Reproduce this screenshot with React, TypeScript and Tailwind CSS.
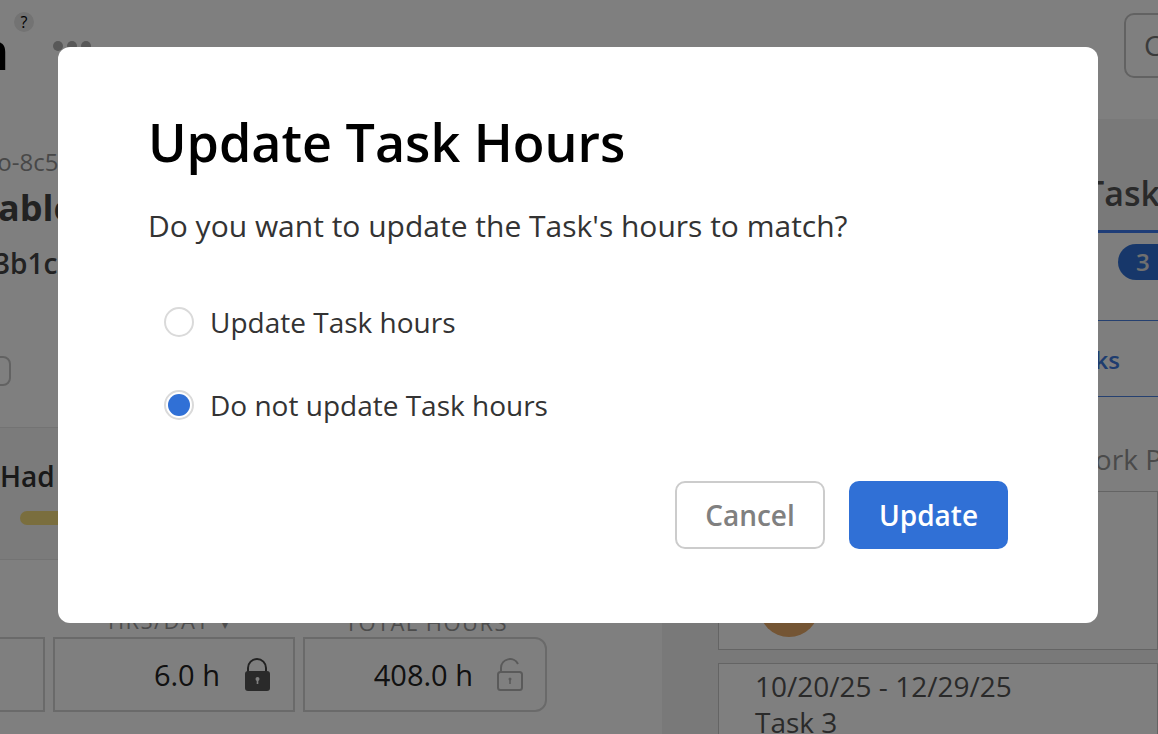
const LockClosed = () => (
    <svg width="30" height="36" viewBox="0 0 30 36" className="shrink-0">
        <path d="M6 16V11a9 9 0 0 1 18 0v5" fill="none" stroke="#444444" strokeWidth="2" />
        <rect x="3" y="14" width="25" height="20" rx="3" fill="#555555" />
        <circle cx="15.5" cy="22" r="2" fill="#ffffff" />
        <rect x="14.7" y="22" width="1.6" height="5" fill="#ffffff" />
    </svg>
);

const LockOpen = () => (
    <svg width="30" height="36" viewBox="0 0 30 36" className="shrink-0">
        <path d="M6 16V11a9 9 0 0 1 17-4" fill="none" stroke="#b4b4b4" strokeWidth="2" />
        <rect x="3" y="15" width="24" height="18" rx="2.5" fill="none" stroke="#b4b4b4" strokeWidth="2" />
        <circle cx="15" cy="22" r="1.5" fill="#b4b4b4" />
        <rect x="14.2" y="22" width="1.6" height="5" fill="#b4b4b4" />
    </svg>
);

const Radio = ({ label, checked }: { label: string; checked?: boolean }) => (
    <label className="flex items-center gap-[16px] h-[40px]">
        <span className="w-[30px] h-[30px] rounded-full border-2 border-[#dadada] bg-white flex items-center justify-center shrink-0">
            {checked && <span className="w-[22px] h-[22px] rounded-full bg-[#3070d6]"></span>}
        </span>
        <span className="text-[28px] leading-[40px] text-[#333333]">{label}</span>
    </label>
);

export default function App() {
    return (
        <div className="relative w-[1158px] h-[734px] overflow-hidden bg-white font-['Open_Sans',sans-serif]">
            {/* Page behind the dialog */}
            <header className="h-[119px] flex">
                <div className="relative w-[120px] overflow-hidden">
                    <span className="block -ml-[83px] mt-[18px] text-[52px] leading-[64px] font-semibold text-black whitespace-nowrap">Ten</span>
                    <span className="absolute left-[14px] top-[12px] w-[20px] h-[20px] rounded-full bg-[#e6e6e6] text-black text-[16px] leading-[20px] text-center">?</span>
                    <div className="absolute left-[53px] top-[41px] flex gap-[4px]">
                        <span className="w-[10px] h-[10px] rounded-full bg-[#b0b0b0]"></span>
                        <span className="w-[10px] h-[10px] rounded-full bg-[#b0b0b0]"></span>
                        <span className="w-[10px] h-[10px] rounded-full bg-[#b0b0b0]"></span>
                    </div>
                </div>
                <div className="ml-auto mt-[13px] -mr-[40px] w-[74px] h-[65px] border-2 border-[#c4c4c4] rounded-[10px] pl-[18px] text-[28px] leading-[60px] text-[#777777]">Cancel</div>
            </header>

            <div className="flex h-[615px]">
                <section className="w-[662px] shrink-0 overflow-hidden">
                    <div className="pt-[25px] -ml-[27px] text-[24px] leading-[36px] text-[#909090] whitespace-nowrap">Pro-8c5</div>
                    <div className="-ml-[91px] mt-[4px] text-[36px] leading-[48px] font-bold text-[#444444] whitespace-nowrap">Available</div>
                    <div className="-ml-[6px] mt-[11px] text-[28px] leading-[40px] font-semibold text-[#444444] whitespace-nowrap">3b1c</div>
                    <div className="-ml-[20px] mt-[73px] w-[31px] h-[30px] rounded-[8px] border-2 border-[#c4c4c4]"></div>
                    <div className="mt-[41px] h-[133px] bg-[#f6f6f6] border-y border-[#e6e6e6] pt-[28px]">
                        <div className="text-[28px] leading-[40px] font-semibold text-[#333333] whitespace-nowrap">Had</div>
                        <div className="ml-[20px] mt-[15px] w-[200px] h-[14px] rounded-full bg-[#f4dc7c]"></div>
                    </div>
                    <div className="flex items-center pl-[108px] mt-[47px] h-[30px] text-[22px] leading-[30px] text-[#999999] tracking-[1.4px] whitespace-nowrap">
                        <span className="w-[237px]">HRS/DAY<span className="ml-[12px] text-[12px]">▾</span></span>
                        <span>TOTAL HOURS</span>
                    </div>
                    <div className="flex gap-[8px] -ml-[200px]">
                        <div className="w-[245px] h-[75px] border-2 border-[#d4d4d4] shrink-0"></div>
                        <div className="w-[242px] h-[75px] border-2 border-[#d4d4d4] flex items-center justify-end gap-[22px] pr-[21px] text-[29px] text-[#222222] shrink-0">
                            6.0 h <LockClosed />
                        </div>
                        <div className="w-[244px] h-[75px] border-2 border-[#d4d4d4] rounded-r-[12px] flex items-center justify-end gap-[22px] pr-[20px] text-[29px] text-[#222222] shrink-0">
                            408.0 h <LockOpen />
                        </div>
                    </div>
                </section>

                <section className="flex-1 bg-[#f2f2f2] overflow-hidden whitespace-nowrap">
                    <div className="h-[114px] pt-[51px] pl-[423px] text-[34px] leading-[46px] font-semibold text-[#555555] border-b-[3px] border-[#3d7af0]">Tasks</div>
                    <div className="h-[88px] pt-[11px] pl-[456px] border-b border-[#4a80e0] bg-[#fcfcfc]">
                        <span className="inline-block w-[60px] h-[36px] rounded-full bg-[#2f6fd4] pl-[18px] text-[24px] leading-[36px] font-semibold text-[#e0e0e0]">3</span>
                    </div>
                    <div className="h-[76px] pr-[38px] pt-[1px] border-b border-[#4a80e0] bg-[#fcfcfc] text-[24px] leading-[76px] font-semibold text-right text-[#3c78de]">Tasks</div>
                    <div className="h-[95px] pt-[42px] pl-[407px] border-b border-[#c8c8c8] bg-[#fcfcfc] text-[28px] leading-[40px] text-[#949494]">Work Plan</div>
                    <div className="ml-[56px] h-[158px] bg-white border-x border-b border-[#c8c8c8] pt-[85px] pl-[40px]">
                        <div className="w-[60px] h-[60px] rounded-full bg-[#e8aa68]"></div>
                    </div>
                    <div className="ml-[56px] mt-[13px] h-[100px] bg-white border border-[#c8c8c8] pl-[36px] pt-[4px] text-[28px] leading-[36px] text-[#555555]">
                        <div>10/20/25 - 12/29/25</div>
                        <div>Task 3</div>
                    </div>
                </section>
            </div>

            {/* Dialog */}
            <div className="absolute inset-0 bg-black/50 pl-[58px] pt-[47px]">
                <div className="w-[1040px] h-[576px] bg-white rounded-[12px] pt-[59px] pl-[91px] pr-[90px]">
                    <h1 className="text-[52px] leading-[72px] font-semibold text-black -ml-[1px]">Update Task Hours</h1>
                    <p className="mt-[27px] text-[30px] leading-[42px] text-[#333333] -ml-[1px]">Do you want to update the Task's hours to match?</p>
                    <div className="mt-[55px] pl-[15px] flex flex-col gap-[43px]">
                        <Radio label="Update Task hours" />
                        <Radio label="Do not update Task hours" checked />
                    </div>
                    <div className="mt-[56px] flex justify-end gap-[24px]">
                        <button className="w-[150px] h-[68px] rounded-[10px] border-2 border-[#cccccc] bg-white text-[28px] font-semibold text-[#808080]">Cancel</button>
                        <button className="w-[159px] h-[68px] rounded-[10px] bg-[#3070d6] text-[28px] font-semibold text-white">Update</button>
                    </div>
                </div>
            </div>
        </div>
    );
}
